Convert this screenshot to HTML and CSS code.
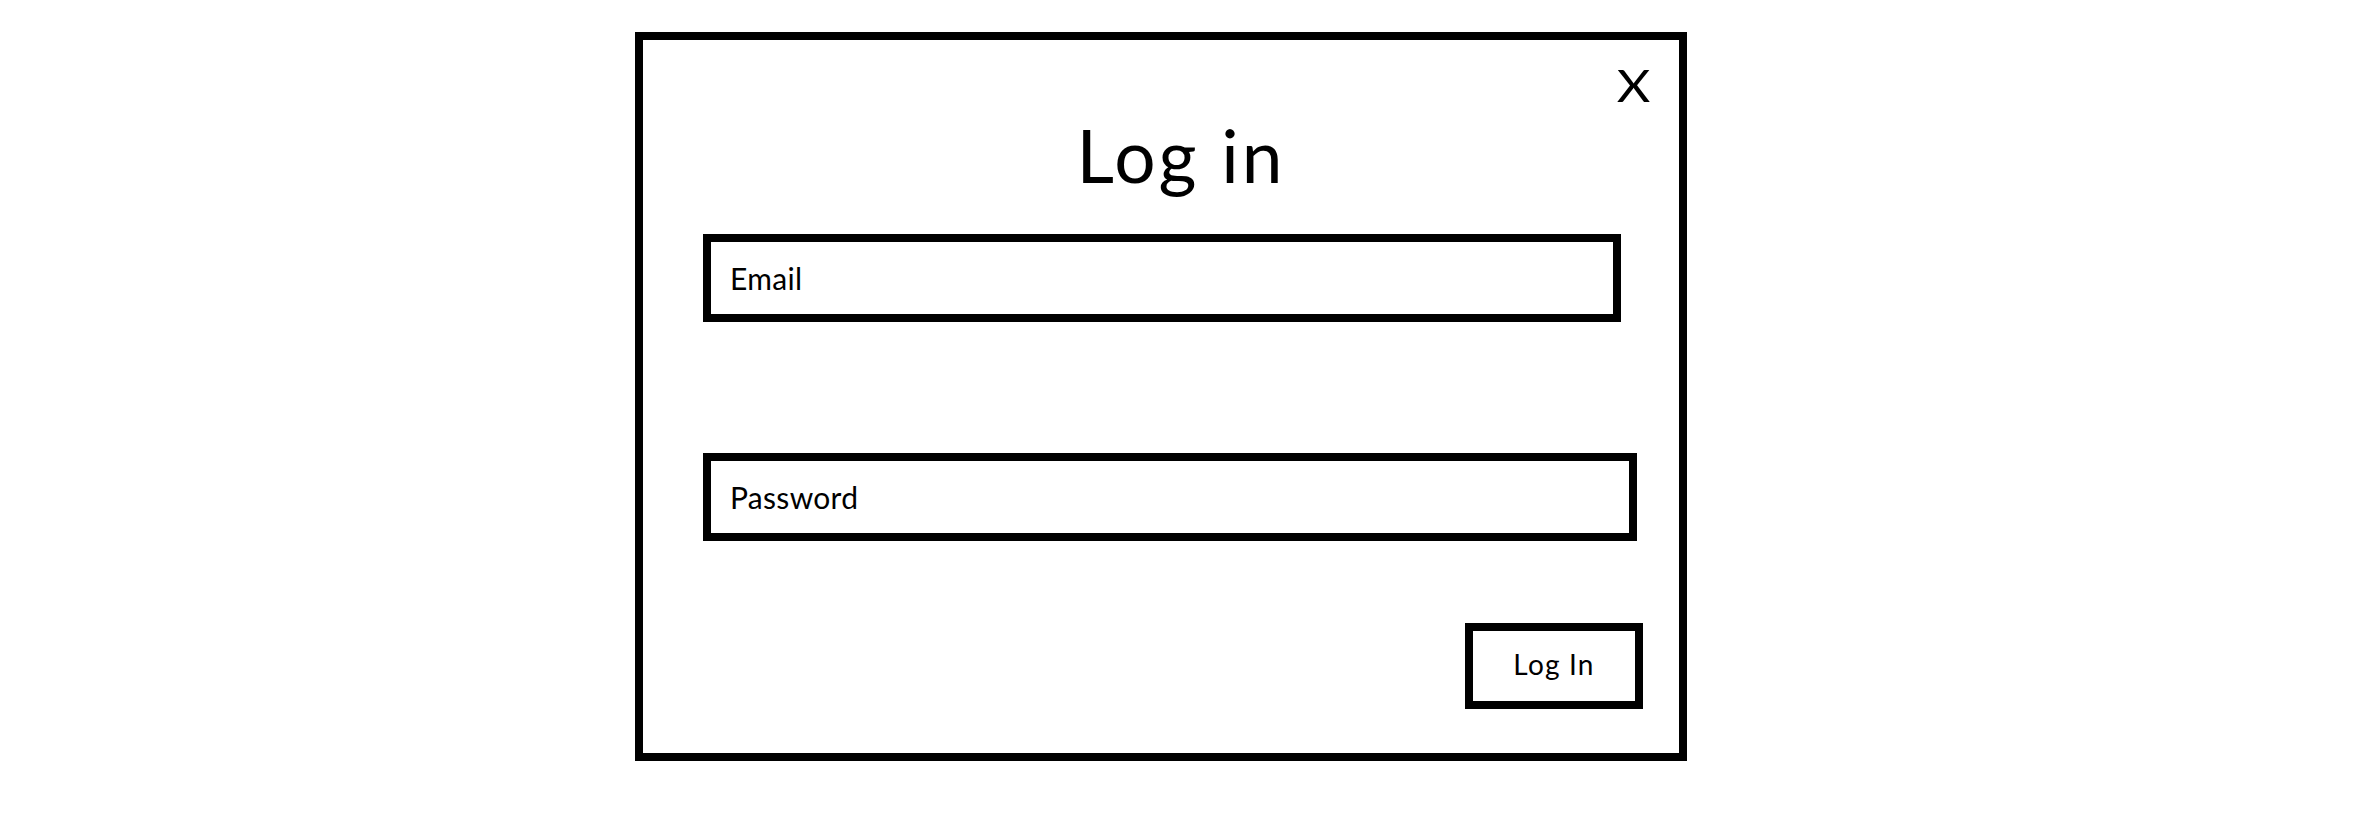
FILE: index.html
```html
<!DOCTYPE html>
<html>
<head>
<meta charset="utf-8">
<link rel="stylesheet" href="styles.css">
</head>
<body>
<div class="page">
  <div class="modal">
    <span class="close">X</span>
    <h1 class="title">Log in</h1>
    <div class="field field-email"><span class="label">Email</span></div>
    <div class="field field-password"><span class="label">Password</span></div>
    <div class="button">Log In</div>
  </div>
</div>
</body>
</html>
```

FILE: styles.css
```css
html, body {
  margin: 0;
  padding: 0;
  background: #fff;
}
body {
  font-family: Lato, "Liberation Sans", sans-serif;
  color: #000;
}
.page {
  width: 2366px;
  height: 819px;
  box-sizing: border-box;
  padding: 32px 0 0 635px;
}
.modal {
  position: relative;
  box-sizing: border-box;
  width: 1052px;
  height: 729px;
  border: 8px solid #000;
  display: flex;
  flex-direction: column;
  align-items: flex-start;
}
.close {
  position: absolute;
  top: 23px;
  right: 31px;
  font-size: 45px;
  line-height: 45px;
  transform: scaleX(1.15);
  transform-origin: center;
}
.title {
  margin: 79px 0 0 0;
  align-self: stretch;
  padding-left: 40px;
  text-align: center;
  font-weight: 400;
  font-size: 73px;
  line-height: 72px;
  letter-spacing: 3px;
}
.field {
  box-sizing: border-box;
  height: 88px;
  border: 8px solid #000;
  margin-left: 60px;
  display: flex;
  align-items: center;
  padding-left: 19px;
}
.field-email {
  width: 918px;
  margin-top: 43px;
}
.field-password {
  width: 934px;
  margin-top: 131px;
}
.label {
  font-size: 30px;
  line-height: 36px;
  letter-spacing: 0.3px;
}
.button {
  box-sizing: border-box;
  align-self: flex-end;
  margin: 82px 36px 0 0;
  width: 178px;
  height: 86px;
  border: 8px solid #000;
  display: flex;
  align-items: center;
  justify-content: center;
  padding-bottom: 5px;
  font-size: 28px;
  line-height: 34px;
  letter-spacing: 1.2px;
}
```
